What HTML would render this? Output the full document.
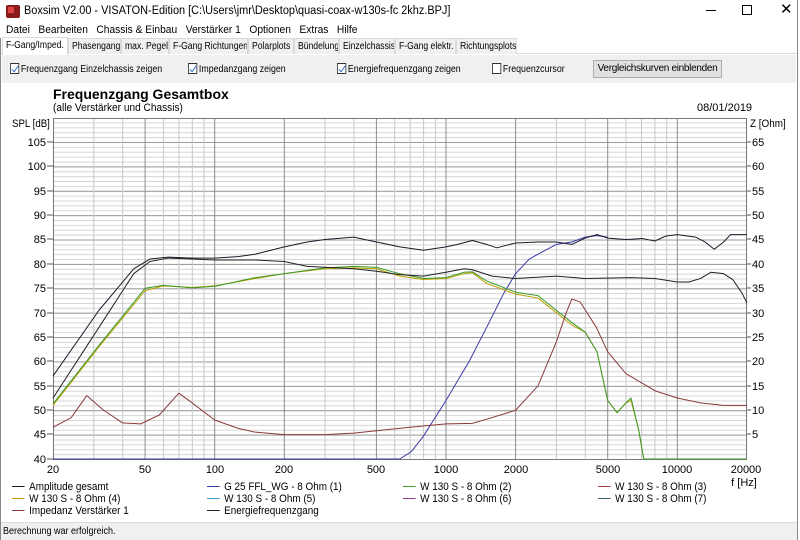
<!DOCTYPE html>
<html><head><meta charset="utf-8">
<style>
*{margin:0;padding:0;box-sizing:border-box}
body{width:800px;height:540px;overflow:hidden;background:#fff;font-family:"Liberation Sans",sans-serif;font-size:11px;color:#000;position:relative}
.abs{position:absolute;white-space:nowrap}
.tab{position:absolute;top:38px;height:16px;border:1px solid #d9d9d9;border-bottom:none;background:#f0f0f0;font-size:10px;padding:2px 0 0 3px;white-space:nowrap;overflow:hidden}
.tab span{display:inline-block;transform:scaleX(0.86);transform-origin:left}
.cbl{position:absolute;top:63px;white-space:nowrap;font-size:10.5px;transform:scaleX(0.84);transform-origin:left}
.cb{display:inline-block;width:11px;height:11px;border:1px solid #333;background:#fff;vertical-align:-2px;margin-right:2px;position:relative}
.cb.c::after{content:"";position:absolute;left:3px;top:0px;width:3px;height:7px;border:solid #2266cc;border-width:0 1.5px 1.5px 0;transform:rotate(40deg)}
.lg{position:absolute;font-size:11px;white-space:nowrap;transform:scaleX(0.9);transform-origin:left}
.lg i{display:inline-block;width:14px;height:1px;vertical-align:3px;margin-right:5px}
</style></head><body>
<div class="abs" style="left:6px;top:5px;width:14px;height:13px;background:#8b1a1a;border-radius:2px"></div>
<div class="abs" style="left:8px;top:7px;width:6px;height:6px;background:#d44;"></div>
<div class="abs" style="left:24px;top:5px;font-size:11.5px;transform:scaleX(0.95);transform-origin:left">Boxsim V2.00 - VISATON-Edition [C:\Users\jmr\Desktop\quasi-coax-w130s-fc 2khz.BPJ]</div>
<div class="abs" style="left:706px;top:10px;width:10px;height:1px;background:#000"></div>
<div class="abs" style="left:742px;top:5px;width:10px;height:10px;border:1px solid #000"></div>
<div class="abs" style="left:780px;top:0px;font-size:15px">✕</div>
<div class="abs" style="left:6px;top:24px;font-size:11px;transform:scaleX(0.93);transform-origin:left">Datei&nbsp;&nbsp;&nbsp;Bearbeiten&nbsp;&nbsp;&nbsp;Chassis &amp; Einbau&nbsp;&nbsp;&nbsp;Verstärker 1&nbsp;&nbsp;&nbsp;Optionen&nbsp;&nbsp;&nbsp;Extras&nbsp;&nbsp;&nbsp;Hilfe</div>
<div class="abs" style="left:0;top:53px;width:798px;height:1px;background:#d9d9d9"></div>
<div class="tab" style="left:2px;top:37px;height:18px;background:#fff;width:66px"><span>F-Gang/Imped.</span></div>
<div class="tab" style="left:68px;width:53px"><span>Phasengang</span></div>
<div class="tab" style="left:121px;width:48px"><span>max. Pegel</span></div>
<div class="tab" style="left:169px;width:79px"><span>F-Gang Richtungen</span></div>
<div class="tab" style="left:248px;width:46px"><span>Polarplots</span></div>
<div class="tab" style="left:294px;width:45px"><span>Bündelung</span></div>
<div class="tab" style="left:339px;width:56px"><span>Einzelchassis</span></div>
<div class="tab" style="left:395px;width:61px"><span>F-Gang elektr.</span></div>
<div class="tab" style="left:456px;width:61px"><span>Richtungsplots</span></div>
<div class="abs" style="left:2px;top:55px;width:794px;height:28px;background:#f0f0f0"></div>
<div class="cbl" style="left:10px"><span class="cb c"></span>Frequenzgang Einzelchassis zeigen</div>
<div class="cbl" style="left:188px"><span class="cb c"></span>Impedanzgang zeigen</div>
<div class="cbl" style="left:337px"><span class="cb c"></span>Energiefrequenzgang zeigen</div>
<div class="cbl" style="left:492px"><span class="cb"></span>Frequenzcursor</div>
<div class="abs" style="left:593px;top:60px;width:129px;height:18px;border:1px solid #adadad;background:#e1e1e1;font-size:10px;text-align:center;line-height:16px;letter-spacing:-0.3px">Vergleichskurven einblenden</div>
<div class="abs" style="left:0;top:38px;width:1px;height:502px;background:#888"></div>
<div class="abs" style="left:797px;top:0;width:1px;height:540px;background:#888"></div>
<div class="abs" style="left:53px;top:86px;font-size:14px;font-weight:bold">Frequenzgang Gesamtbox</div>
<div class="abs" style="left:53px;top:102px;font-size:11px;transform:scaleX(0.92);transform-origin:left">(alle Verstärker und Chassis)</div>
<div class="abs" style="left:697px;top:102px;font-size:11px">08/01/2019</div>
<div class="abs" style="left:12px;top:118px;font-size:11px;transform:scaleX(0.88);transform-origin:left">SPL [dB]</div>
<div class="abs" style="left:750px;top:118px;font-size:11px;transform:scaleX(0.9);transform-origin:left">Z [Ohm]</div>
<svg class="abs" style="left:0;top:0" width="800" height="540">
<defs>
<pattern id="mn" x="0" y="117.6" width="10" height="4.877" patternUnits="userSpaceOnUse"><rect y="0" width="10" height="1" fill="#d6d6d6"/></pattern>
<pattern id="mj" x="0" y="117.6" width="10" height="24.385" patternUnits="userSpaceOnUse"><rect y="0" width="10" height="1" fill="#9a9a9a"/></pattern>
</defs>
<rect x="53" y="118" width="694" height="341" fill="url(#mn)"/>
<rect x="53" y="118" width="694" height="341" fill="url(#mj)"/>
<g stroke="#c8c8c8" stroke-width="1">
<path d="M93.8 118V459M122.7 118V459M163.4 118V459M178.9 118V459M192.3 118V459M204.1 118V459M325.1 118V459M354 118V459M394.7 118V459M410.2 118V459M423.6 118V459M435.4 118V459M556.4 118V459M585.3 118V459M626 118V459M641.5 118V459M654.9 118V459M666.7 118V459"/>
</g>
<g stroke="#8c8c8c" stroke-width="1">
<path d="M145.1 118V459M214.7 118V459M284.3 118V459M376.4 118V459M446 118V459M515.6 118V459M607.7 118V459M677.3 118V459"/>
</g>
<rect x="53.5" y="118.5" width="693" height="341" fill="none" stroke="#777"/>
<g font-family="Liberation Sans" font-size="11" fill="#000" text-anchor="end">
<text x="46" y="146">105</text><text x="46" y="170">100</text><text x="46" y="195">95</text><text x="46" y="219">90</text><text x="46" y="243">85</text><text x="46" y="268">80</text><text x="46" y="292">75</text><text x="46" y="317">70</text><text x="46" y="341">65</text><text x="46" y="365">60</text><text x="46" y="390">55</text><text x="46" y="414">50</text><text x="46" y="438">45</text><text x="46" y="463">40</text>
</g>
<g font-family="Liberation Sans" font-size="11" fill="#000">
<text x="752" y="146">65</text><text x="752" y="170">60</text><text x="752" y="195">55</text><text x="752" y="219">50</text><text x="752" y="243">45</text><text x="752" y="268">40</text><text x="752" y="292">35</text><text x="752" y="317">30</text><text x="752" y="341">25</text><text x="752" y="365">20</text><text x="752" y="390">15</text><text x="752" y="414">10</text><text x="752" y="438">5</text>
</g>
<g stroke="#555"><path d="M47 142h6M47 166h6M47 191h6M47 215h6M47 239h6M47 264h6M47 288h6M47 313h6M47 337h6M47 361h6M47 386h6M47 410h6M47 434h6M47 459h6M747 142h4M747 166h4M747 191h4M747 215h4M747 239h4M747 264h4M747 288h4M747 313h4M747 337h4M747 361h4M747 386h4M747 410h4M747 434h4"/></g>
<g font-family="Liberation Sans" font-size="11" fill="#000" text-anchor="middle">
<text x="53" y="473">20</text><text x="145" y="473">50</text><text x="215" y="473">100</text><text x="284" y="473">200</text><text x="376" y="473">500</text><text x="446" y="473">1000</text><text x="516" y="473">2000</text><text x="608" y="473">5000</text><text x="677" y="473">10000</text><text x="746" y="473">20000</text>
<text x="744" y="486">f [Hz]</text>
</g>
<g transform="matrix(231.3 0 0 -4.877 -247.93 654.08)" fill="none" stroke-linejoin="round">
<path vector-effect="non-scaling-stroke" stroke="#3a3aa8" stroke-width="1" d="M1.301 40L2.8 40L2.85 41.5L2.9 44.5L3 52L3.1 60L3.176 67L3.25 74L3.301 78L3.36 81L3.398 82L3.477 84L3.544 84.5L3.602 85.5L3.653 85.8L3.699 85.5"/>
<path vector-effect="non-scaling-stroke" stroke="#bda000" stroke-width="1" d="M1.301 51L1.5 63L1.699 74.5L1.778 75.5L1.903 75.2L2 75.5L2.176 77L2.301 78L2.477 79L2.602 79.2L2.699 79L2.8 77.5L2.903 76.8L3 77L3.079 78L3.114 78.2L3.176 76L3.301 73.8L3.398 73L3.477 70L3.544 67.5L3.602 66L3.653 62L3.699 52L3.74 49.5L3.778 51.5L3.8 52L3.833 46L3.855 40L4.301 40"/>
<path vector-effect="non-scaling-stroke" stroke="#3c9a2a" stroke-width="1" d="M1.301 51.3L1.5 63.3L1.699 75L1.778 75.6L1.903 75.1L2 75.4L2.176 77.2L2.301 78L2.477 79.2L2.602 79.5L2.699 79.3L2.8 78L2.903 77L3 77.2L3.079 78.3L3.114 78.4L3.176 76.5L3.301 74.2L3.398 73.5L3.477 70.5L3.544 68L3.602 66L3.653 62L3.699 52L3.74 49.5L3.778 51.5L3.8 52.5L3.833 46L3.855 40L4.301 40"/>
<path vector-effect="non-scaling-stroke" stroke="#8b3a3a" stroke-width="1" d="M1.301 46.5L1.38 48.5L1.447 53L1.52 50L1.602 47.4L1.68 47.2L1.76 49L1.845 53.5L1.903 51.5L2 48L2.1 46.3L2.176 45.5L2.301 45L2.477 45L2.602 45.3L2.699 45.8L2.845 46.5L3 47.2L3.114 47.3L3.2 48.5L3.301 50L3.398 55L3.477 64L3.52 70L3.544 72.8L3.58 72.2L3.65 67L3.699 62L3.778 57.5L3.85 55.5L3.903 54L4 52.5L4.1 51.5L4.2 51L4.301 51"/>
<path vector-effect="non-scaling-stroke" stroke="#222" stroke-width="1" d="M1.301 52.5L1.5 67L1.65 78L1.72 80.5L1.8 81.2L1.903 81L2 80.8L2.176 80.8L2.301 80.5L2.4 79.5L2.602 79L2.699 78.5L2.8 77.8L2.903 77.5L3 78.3L3.079 79L3.114 78.8L3.2 77.5L3.301 77L3.477 77.5L3.602 77L3.8 77.2L3.903 77L4 76.3L4.05 76.3L4.1 77L4.146 78.3L4.2 78L4.24 76.8L4.28 74L4.301 72"/>
<path vector-effect="non-scaling-stroke" stroke="#1a1a2a" stroke-width="1" d="M1.301 57L1.5 70.5L1.65 79L1.72 81L1.8 81.4L1.903 81.2L2 81.2L2.1 81.5L2.176 82L2.301 83.5L2.4 84.5L2.477 85L2.602 85.5L2.699 84.5L2.8 83.5L2.903 82.8L3 83.5L3.05 84L3.114 84.8L3.176 84L3.22 83.3L3.301 84.3L3.398 84.5L3.477 84.5L3.544 84L3.602 85.3L3.653 86L3.699 85.3L3.778 85L3.85 85.2L3.903 84.7L3.95 85.7L4 86L4.079 85.5L4.12 84.5L4.16 83L4.2 84.5L4.23 86L4.301 86"/>
</g>
</svg>
<div class="lg" style="left:12px;top:481px"><i style="background:#1a1a2a"></i>Amplitude gesamt</div>
<div class="lg" style="left:207px;top:481px"><i style="background:#3a3aa8"></i>G 25 FFL_WG - 8 Ohm (1)</div>
<div class="lg" style="left:403px;top:481px"><i style="background:#3c9a2a"></i>W 130 S - 8 Ohm (2)</div>
<div class="lg" style="left:598px;top:481px"><i style="background:#a04040"></i>W 130 S - 8 Ohm (3)</div>
<div class="lg" style="left:12px;top:493px"><i style="background:#d0a000"></i>W 130 S - 8 Ohm (4)</div>
<div class="lg" style="left:207px;top:493px"><i style="background:#40a0d0"></i>W 130 S - 8 Ohm (5)</div>
<div class="lg" style="left:403px;top:493px"><i style="background:#8a3a8a"></i>W 130 S - 8 Ohm (6)</div>
<div class="lg" style="left:598px;top:493px"><i style="background:#3a5a70"></i>W 130 S - 8 Ohm (7)</div>
<div class="lg" style="left:12px;top:505px"><i style="background:#8b3a3a"></i>Impedanz Verstärker 1</div>
<div class="lg" style="left:207px;top:505px"><i style="background:#222"></i>Energiefrequenzgang</div>
<div class="abs" style="left:1px;top:522px;width:796px;height:18px;background:#f0f0f0;border-top:1px solid #ddd"></div>
<div class="abs" style="left:3px;top:526px;font-size:10px;transform:scaleX(0.9);transform-origin:left">Berechnung war erfolgreich.</div>
</body></html>
